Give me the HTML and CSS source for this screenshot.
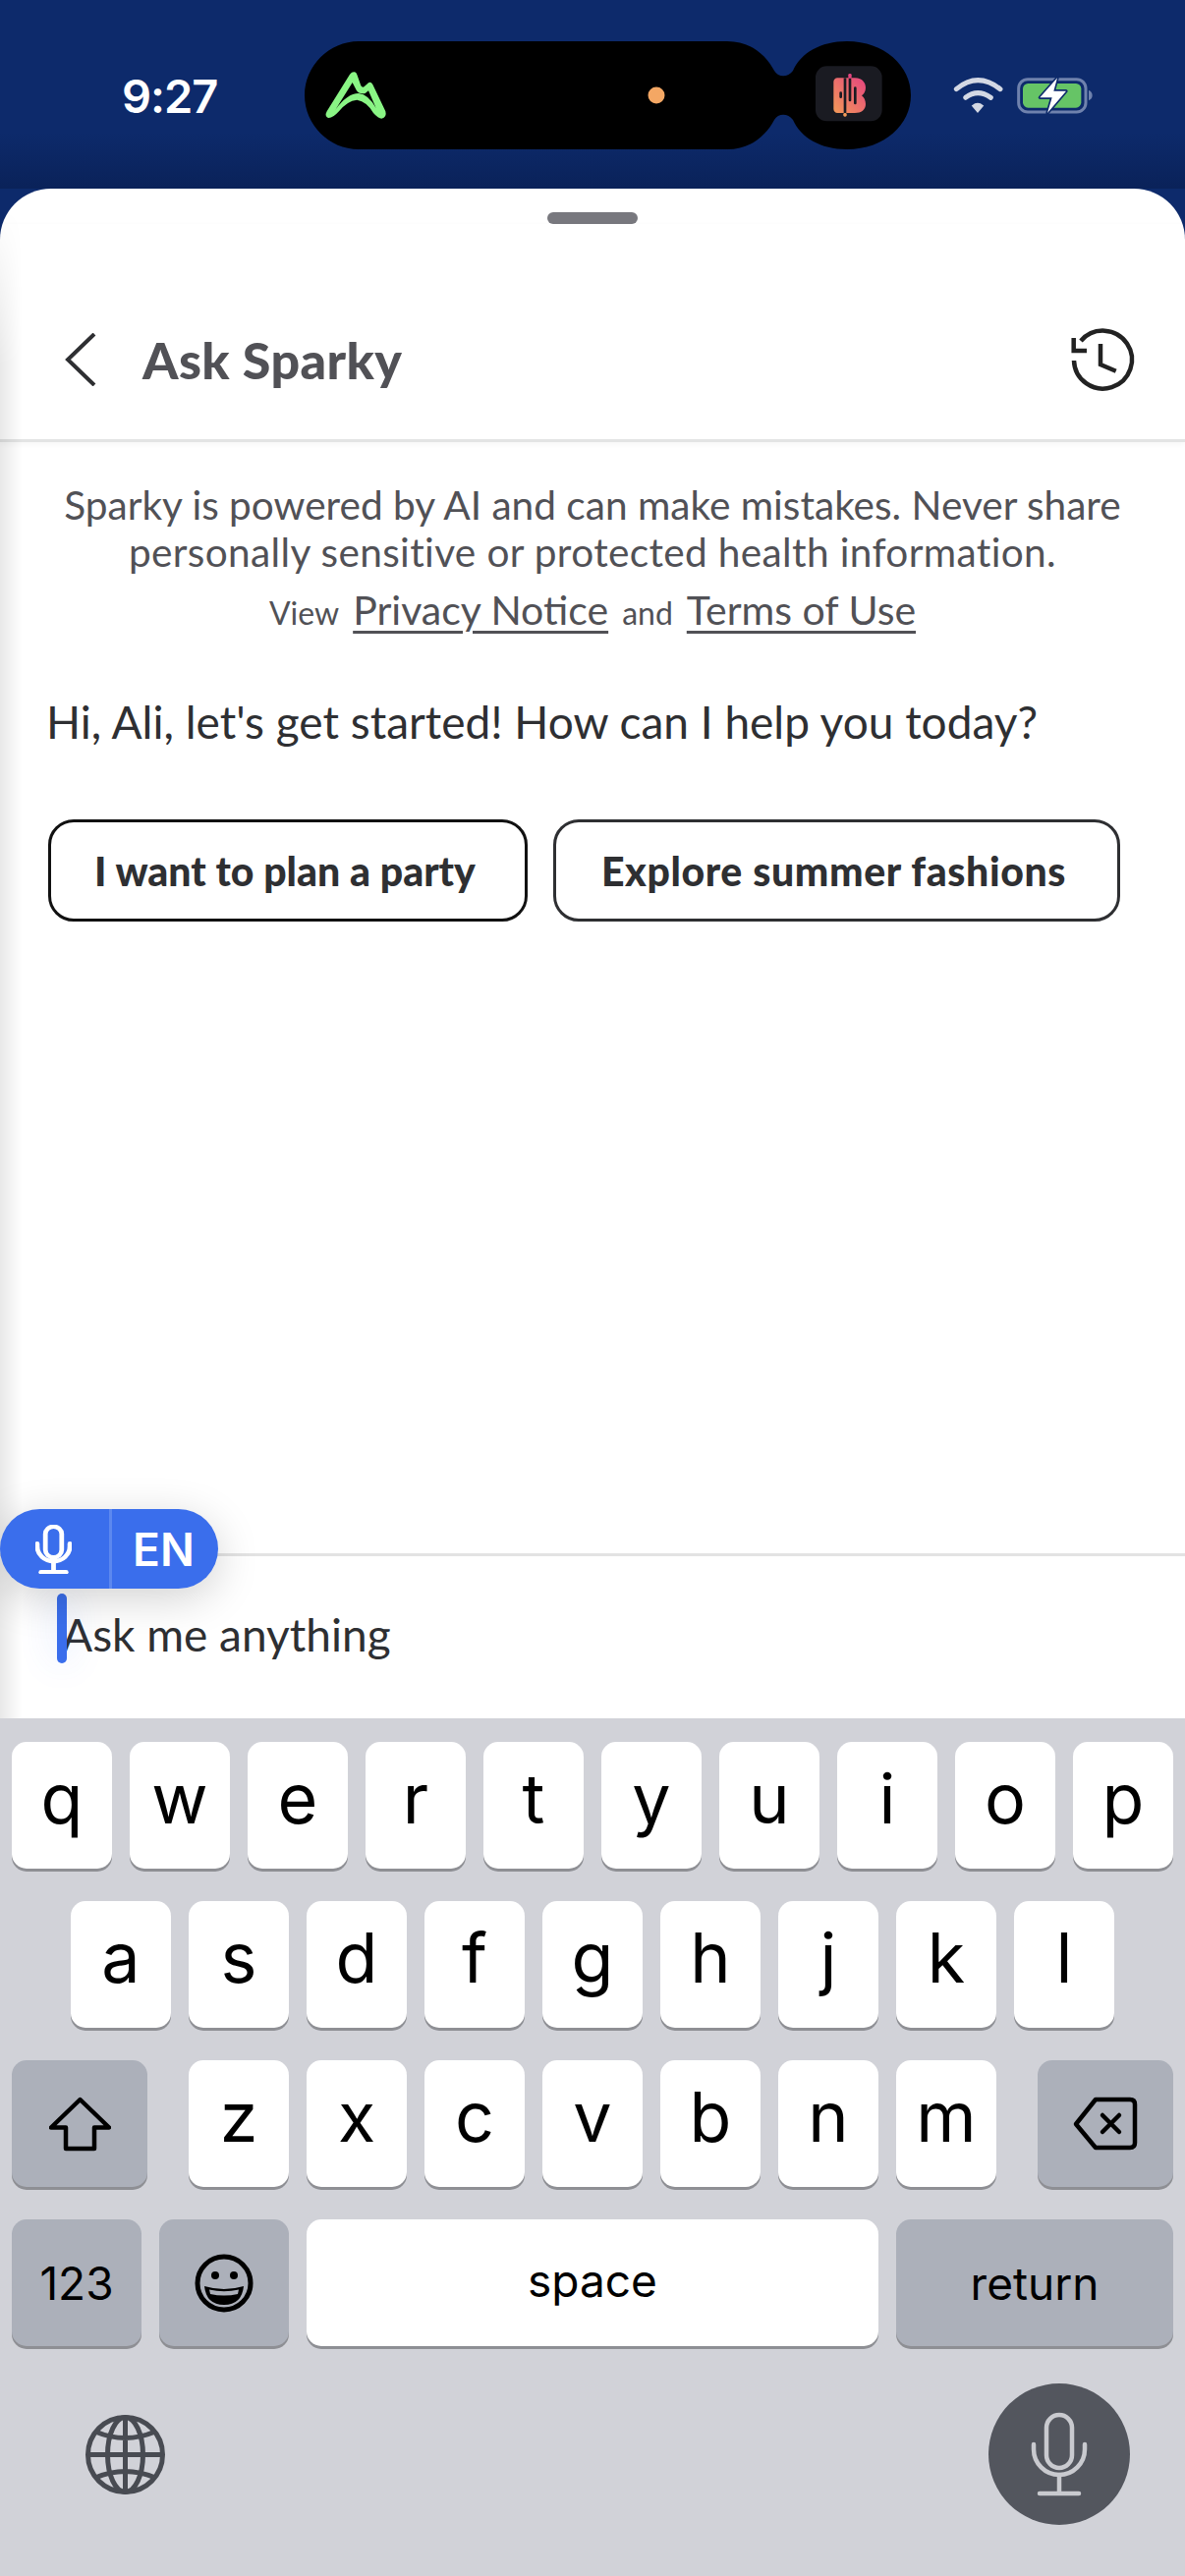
FILE: index.html
```html
<!DOCTYPE html>
<html lang="en">
<head>
<meta charset="utf-8">
<title>Ask Sparky</title>
<link rel="stylesheet" href="styles.css">
</head>
<body>
<div class="status">
  <div class="status-row">
    <span class="time">9:27</span>
    <svg class="island" viewBox="0 0 617 110" width="617" height="110">
      <defs>
        <linearGradient id="bgrad" x1="1" y1="0" x2="0" y2="1">
          <stop offset="0" stop-color="#e5447f"/>
          <stop offset="1" stop-color="#f29a58"/>
        </linearGradient>
      </defs>
      <path fill="#000" d="M55 0H430C455 0 470 15 478 30C482 37 492 37 497 30C505 12 525 0 552 0C590 0 617 25 617 55C617 85 590 110 552 110C525 110 505 98 497 80C492 73 482 73 478 80C470 95 455 110 430 110H55C25 110 0 85 0 55C0 25 25 0 55 0Z"/>
      <g transform="translate(10 18) scale(.3333)">
        <path fill="#8af585" fill-rule="evenodd" d="M120 40Q127 38 131 50L142 82Q148 90 155 82L165 73Q172 68 178 78L217 160Q222 178 205 182Q195 182 180 165Q160 130 130 125Q100 128 75 160Q55 182 42 180Q30 175 38 160L108 47Q114 40 120 40ZM116 72L64 155Q100 105 135 105Q165 108 188 150L165 97L155 105Q135 108 128 95Z"/>
      </g>
      <ellipse cx="358" cy="55" rx="8.5" ry="8.5" fill="#f4a764"/>
      <g transform="translate(515 18) scale(.3333)">
        <rect x="15" y="22" width="203" height="168" rx="34" fill="#1a1b22"/>
        <path fill="url(#bgrad)" d="M82 58H135C160 58 168 75 168 88C168 100 162 108 156 112C164 118 168 128 168 138C168 155 155 165 135 165H82C75 165 70 160 70 153V70C70 63 75 58 82 58Z"/>
        <rect x="88" y="100" width="8" height="20" rx="4" fill="#1a1b22"/>
        <rect x="101" y="58" width="8" height="108" fill="#1a1b22"/>
        <rect x="100" y="165" width="10" height="11" rx="4" fill="#f29a58"/>
        <rect x="116" y="58" width="8" height="72" rx="4" fill="#1a1b22"/>
        <rect x="115" y="45" width="10" height="14" rx="4" fill="#e5447f"/>
        <rect x="132" y="85" width="8" height="54" rx="4" fill="#1a1b22"/>
      </g>
    </svg>
    <svg class="sys-icons" viewBox="0 21 798 300" width="266" height="100">
      <g class="wifi">
        <path d="M100 152Q165 98 234 152"/>
        <path d="M128 178Q165 150 205 178"/>
        <path class="wifi-dot" d="M149 203Q165 190 181 203L165 222Z"/>
      </g>
      <rect x="290" y="122" width="205" height="100" rx="28" fill="none" stroke="#6f82ad" stroke-width="9"/>
      <rect x="303" y="135" width="178" height="74" rx="16" fill="#66c466"/>
      <path d="M504 155Q515 160 515 171Q515 182 504 187Z" fill="#6f82ad"/>
      <path d="M408 118L355 178H392L378 225L435 158H397Z" fill="#fff" stroke="#0d2a6b" stroke-width="10" stroke-linejoin="round" paint-order="stroke"/>
    </svg>
  </div>
</div>

<main class="sheet">
  <div class="handle"></div>
  <header class="header">
    <svg class="back" viewBox="0 0 34 54" width="34" height="54"><path d="M31 1L4 27L31 53"/></svg>
    <h1 class="title">Ask Sparky</h1>
    <svg class="history" viewBox="0 0 100 90" width="100" height="90">
      <path d="M23 45A29.5 29.5 0 1 0 30 25"/>
      <path d="M22.7 22V35H36"/>
      <path d="M50 28V49L65.7 55.7"/>
    </svg>
  </header>
  <section class="notice">
    <p class="notice-text">Sparky is powered by AI and can make mistakes. Never share<br><span class="notice-line">personally sensitive or protected health information.</span></p>
    <p class="notice-links"><span class="small">View</span><a class="link">Privacy Notice</a><span class="small">and</span><a class="link">Terms of Use</a></p>
  </section>
  <section class="chat">
    <p class="greeting">Hi, Ali, let's get started! How can I help you today?</p>
    <div class="chips">
      <button class="chip chip-first">I want to plan a party</button>
      <button class="chip chip-second">Explore summer fashions</button>
    </div>
  </section>
  <section class="input">
    <div class="pill">
      <span class="pill-mic">
        <svg class="mic mic-white" viewBox="0 0 58 86" width="37" height="50" preserveAspectRatio="none">
          <rect x="16" y="3" width="26" height="54" rx="13"/>
          <path d="M3 33V38A26 26 0 0 0 55 38V33"/><path d="M29 64V82"/><path d="M9 83H49"/>
        </svg>
      </span>
      <span class="pill-lang">EN</span>
    </div>
    <span class="cursor"></span>
    <span class="placeholder">Ask me anything</span>
  </section>
</main>

<div class="keyboard">
  <div class="kb-row">
    <span class="key">q</span><span class="key">w</span><span class="key">e</span><span class="key">r</span><span class="key">t</span><span class="key">y</span><span class="key">u</span><span class="key">i</span><span class="key">o</span><span class="key">p</span>
  </div>
  <div class="kb-row">
    <span class="key">a</span><span class="key">s</span><span class="key">d</span><span class="key">f</span><span class="key">g</span><span class="key">h</span><span class="key">j</span><span class="key">k</span><span class="key">l</span>
  </div>
  <div class="kb-row kb-row-split">
    <span class="key key-fn key-wide">
      <svg class="glyph" viewBox="0 0 63 56" width="63" height="56"><path d="M31.5 3L61 31.5H46V53H17V31.5H2Z"/></svg>
    </span>
    <div class="kb-group">
      <span class="key">z</span><span class="key">x</span><span class="key">c</span><span class="key">v</span><span class="key">b</span><span class="key">n</span><span class="key">m</span>
    </div>
    <span class="key key-fn key-wide">
      <svg class="glyph" viewBox="0 0 66 55" width="66" height="55"><path d="M23 3H58Q63 3 63 8V47Q63 52 58 52H23L3 28Z"/><path d="M30 19L47 36M47 19L30 36"/></svg>
    </span>
  </div>
  <div class="kb-row">
    <span class="key key-fn key-num key-label">123</span>
    <span class="key key-fn key-num">
      <svg class="emoji" viewBox="0 0 60 60" width="60" height="60">
        <circle cx="30" cy="30" r="27" fill="none" stroke="#000" stroke-width="5"/>
        <circle cx="21" cy="22" r="4" fill="#000"/><circle cx="40" cy="22" r="4" fill="#000"/>
        <path d="M10 33Q30 39 50 33Q48 52 30 52Q12 52 10 33Z" fill="#000"/>
        <path d="M15 36.500Q30 40 45 36.500L44 41Q30 44 16 41Z" fill="#acb0ba"/>
      </svg>
    </span>
    <span class="key key-space key-label">space</span>
    <span class="key key-fn key-return key-label">return</span>
  </div>
  <div class="kb-bottom">
    <svg class="globe" viewBox="0 0 81 81" width="81" height="81">
      <circle cx="40.500" cy="40.500" r="38"/>
      <ellipse cx="40.500" cy="40.500" rx="18" ry="38"/>
      <path d="M40.500 2.500V78.500M2.500 40.500H78.500M10 17Q40.500 30 71 17M10 64Q40.500 51 71 64"/>
    </svg>
    <span class="dictate">
      <svg class="mic mic-grey" viewBox="0 0 58 86" width="58" height="86">
        <rect x="16" y="3" width="26" height="54" rx="13"/>
        <path d="M3 33V38A26 26 0 0 0 55 38V33"/><path d="M29 64V82"/><path d="M9 83H49"/>
      </svg>
    </span>
  </div>
</div>
</body>
</html>
```
FILE: styles.css
```css
* { box-sizing: border-box; }
html, body { margin: 0; padding: 0; }
body {
  width: 1206px;
  height: 2622px;
  overflow: hidden;
  display: flex;
  flex-direction: column;
  background: #0d2a6b;
  font-family: Lato, "Open Sans", sans-serif;
}

/* status bar */
.status {
  height: 192px;
  flex: none;
  padding-top: 42px;
  background: linear-gradient(#0d2a6b 0, #0d2a6b 135px, #0a2259 192px);
}
.status-row {
  display: flex;
  align-items: center;
  height: 110px;
  padding-left: 124px;
}
.time {
  width: 186px;
  flex: none;
  color: #fff;
  font: 600 47px Inter, sans-serif;
  letter-spacing: -1px;
}
.island { flex: none; }
.sys-icons { flex: none; margin-left: 13px; }
.wifi { filter: blur(1.6px); }
.wifi path { fill: none; stroke: #d3d8e4; stroke-width: 15; stroke-linecap: round; }
.wifi .wifi-dot { fill: #d3d8e4; stroke-width: 4; }

/* sheet */
.sheet {
  position: relative;
  flex: none;
  height: 1557px;
  display: flex;
  flex-direction: column;
  background: #fff;
  border-radius: 52px 52px 0 0;
}
.sheet::after {
  content: "";
  position: absolute;
  left: 0;
  top: 20px;
  bottom: 0;
  width: 22px;
  background: linear-gradient(90deg, rgba(0, 0, 0, .09), rgba(0, 0, 0, 0));
  -webkit-mask-image: linear-gradient(rgba(0, 0, 0, 0), #000 160px);
  mask-image: linear-gradient(rgba(0, 0, 0, 0), #000 160px);
  pointer-events: none;
}
.handle {
  width: 92px;
  height: 12px;
  margin: 24px auto 0;
  border-radius: 6px;
  background: #78787e;
  flex: none;
}
.header {
  height: 222px;
  flex: none;
  display: flex;
  align-items: flex-start;
  padding: 0 36px 0 65px;
  border-bottom: 3px solid #e3e4e4;
  box-shadow: 0 2px 6px rgba(0, 0, 0, .04);
}
.back { margin-top: 111px; fill: none; stroke: #2e2f32; stroke-width: 4; flex: none; }
.title {
  margin: 108px 0 0 46px;
  font-size: 52px;
  line-height: 60px;
  font-weight: 900;
  letter-spacing: .4px;
  color: #515156;
  flex: 1;
}
.history { margin-top: 94px; flex: none; fill: none; stroke: #222; stroke-width: 4.5; }

/* notice */
.notice { flex: none; text-align: center; padding-top: 40px; color: #515156; }
.notice-text { margin: 0; font-size: 40.6px; line-height: 48px; }
.notice-line { letter-spacing: .35px; }
.notice-links {
  margin: 11px 0 0;
  display: flex;
  justify-content: center;
  align-items: baseline;
  gap: 14px;
}
.small { font-size: 32px; }
.link { font-size: 41px; text-decoration: underline; text-decoration-thickness: 3px; text-underline-offset: 6px; line-height: 48px; }

/* chat */
.chat { flex: 1; padding: 63px 49px 0; }
.greeting { margin: 0 0 0 -2px; font-size: 46px; line-height: 54px; color: #2e2f32; }
.chips { display: flex; gap: 26px; margin-top: 72px; }
.chip {
  height: 104px;
  border-radius: 26px;
  border: 3px solid #2e2f32;
  background: #fff;
  color: #2e2f32;
  font: 900 41px Lato, sans-serif;
  padding: 0 6px 0 0;
}
.chip-first { width: 488px; border-color: #111; }
.chip-second { width: 577px; letter-spacing: .6px; }

/* input */
.input {
  position: relative;
  flex: none;
  height: 168px;
  border-top: 3px solid #e3e3e3;
  padding: 53px 0 0 63px;
}
.placeholder { font-size: 46px; line-height: 54px; color: #2e2f32; display: block; }
.pill {
  position: absolute;
  z-index: 2;
  left: 0;
  top: -48px;
  width: 222px;
  height: 81px;
  display: flex;
  border-radius: 41px;
  background: #3a6eec;
  color: #fff;
  box-shadow: 0 10px 44px rgba(0, 0, 0, .18);
}
.pill-mic {
  width: 114px;
  flex: none;
  border-right: 3px solid #5c88ef;
  display: flex;
  align-items: center;
  justify-content: center;
  padding-right: 3px;
}
.pill-lang {
  flex: 1;
  display: flex;
  align-items: center;
  justify-content: center;
  padding-right: 3px;
  font: 600 46px Inter, sans-serif;
}
.mic { fill: none; stroke-linecap: round; }
.mic-white { stroke: #fff; stroke-width: 7.5; }
.mic-grey { stroke: #c9cacf; stroke-width: 4.5; }
.cursor {
  position: absolute;
  left: 58px;
  top: 38px;
  width: 10px;
  height: 71px;
  border-radius: 5px;
  background: #3a6eec;
  box-shadow: 0 0 36px rgba(58, 110, 236, .22);
}

/* keyboard */
.keyboard {
  flex: 1;
  background: #d1d2d8;
  padding: 24px 12px 0;
  display: flex;
  flex-direction: column;
  gap: 33px;
}
.kb-row { display: flex; justify-content: center; gap: 18px; }
.kb-row-split { justify-content: space-between; }
.kb-group { display: flex; gap: 18px; }
.key {
  width: 102px;
  height: 129px;
  flex: none;
  display: flex;
  align-items: center;
  justify-content: center;
  padding-bottom: 14px;
  border-radius: 15px;
  background: #fff;
  box-shadow: 0 3px 0 #8e8f94;
  color: #000;
  font: 400 70px Inter, sans-serif;
}
.key-fn { background: #acb0ba; padding-bottom: 0; }
.key-wide { width: 138px; }
.key-num { width: 132px; }
.key-space { width: 582px; padding-bottom: 6px; }
.key-return { width: 282px; }
.key-label { font-size: 46px; font-weight: 400; }
.glyph { fill: none; stroke: #000; stroke-width: 4.5; stroke-linejoin: round; stroke-linecap: round; }
.kb-bottom {
  display: flex;
  justify-content: space-between;
  align-items: center;
  height: 144px;
  margin-top: 5px;
  padding: 0 44px 0 75px;
}
.globe { fill: none; stroke: #484b52; stroke-width: 5; }
.dictate {
  width: 144px;
  height: 144px;
  border-radius: 50%;
  background: #53565e;
  display: flex;
  align-items: center;
  justify-content: center;
}
```
